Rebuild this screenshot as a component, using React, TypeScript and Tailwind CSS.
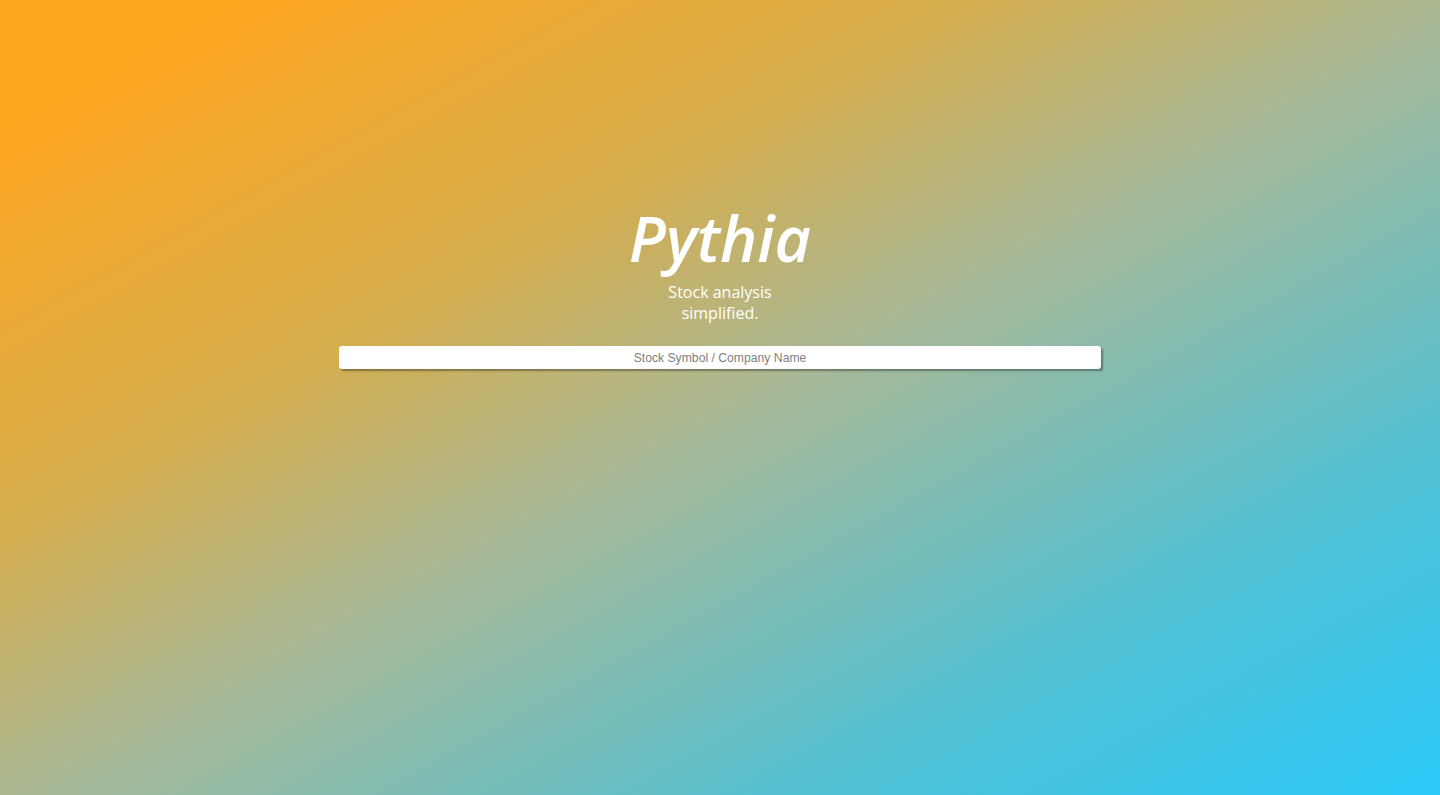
export default function App() {
  return (
    <div className="relative w-full h-[795px] overflow-hidden bg-[linear-gradient(to_bottom_right,#ffa620_8%,#d6ad4c_33%,#a9b895_51%,#52c1d4_78%,#2bc8f8_100%)] font-['Open_Sans',sans-serif]">
      <div className="flex flex-col items-center pt-[200px]">
        <h1 className="text-[63px] leading-[1.2] font-semibold italic text-white">
          Pythia
        </h1>
        <p className="mt-[6px] w-[120px] text-center text-[16px] leading-[21px] text-white">
          Stock analysis simplified.
        </p>
        <div className="mt-[20px] w-[762px]">
          <input
            type="text"
            placeholder="Stock Symbol / Company Name"
            className="w-full h-[23px] pt-[1px] rounded-[3px] bg-white text-center text-[12.2px] text-gray-600 placeholder:text-[#808080] shadow-[2px_2px_2px_rgba(0,0,0,0.35)] outline-none font-['Liberation_Sans',sans-serif]"
          />
        </div>
      </div>
    </div>
  );
}
